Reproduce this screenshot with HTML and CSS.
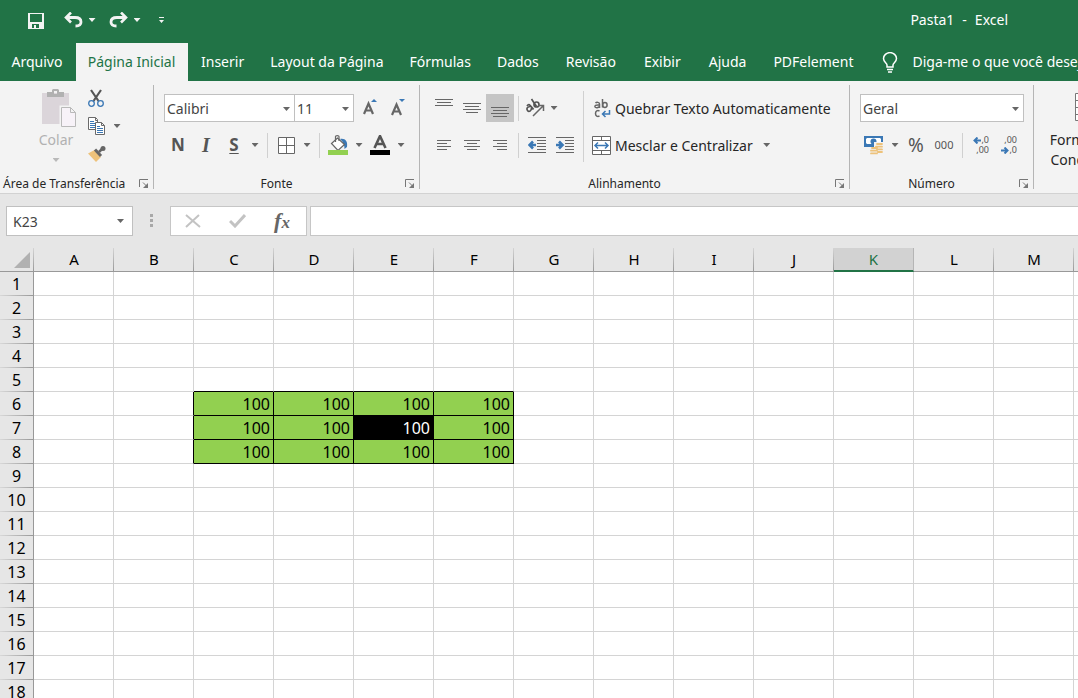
FILE: index.html
```html
<!DOCTYPE html>
<html lang="pt-BR">
<head>
<meta charset="utf-8">
<title>Pasta1 - Excel</title>
<link rel="stylesheet" href="styles.css">
</head>
<body>
<header class="titlebar">
  <div class="quick">
    <button class="q-btn" aria-label="Salvar"><svg width="16" height="16" viewBox="0 0 16 16"><path fill="#f3f3f3" fill-rule="evenodd" d="M0 0h16v16H0zM2 1v8h12V1zM4 11v4h2v-3h2v3h3v-4z"/></svg></button>
    <button class="q-btn undo" aria-label="Desfazer"><svg width="19" height="16" viewBox="0 0 19 16"><path d="M2 5.500h9c4 0 6 2 6 4.500s-2 4-5.500 4" fill="none" stroke="#f3f3f3" stroke-width="2.800"/><path d="M7 .5 2 5.500l5 5" fill="none" stroke="#f3f3f3" stroke-width="2.600"/></svg></button>
    <button class="drop light" aria-label="Opções de desfazer"></button>
    <button class="q-btn redo" aria-label="Refazer"><svg width="19" height="16" viewBox="0 0 19 16"><path d="M17 5.500H8c-4 0-6 2-6 4.500s2 4 5.500 4" fill="none" stroke="#f3f3f3" stroke-width="2.800"/><path d="m12 .5 5 5-5 5" fill="none" stroke="#f3f3f3" stroke-width="2.600"/></svg></button>
    <button class="drop light" aria-label="Opções de refazer"></button>
    <button class="q-btn custom" aria-label="Personalizar"><svg width="5" height="6" viewBox="0 0 5 6"><path fill="#f3f3f3" d="M0 0h5v1H0zM0 3h5L2.500 6z"/></svg></button>
  </div>
  <div class="doc-title"><span>Pasta1</span><span>-</span><span>Excel</span></div>
</header>
<nav class="tabs">
  <button class="tab file">Arquivo</button>
  <button class="tab home active">Página Inicial</button>
  <button class="tab">Inserir</button>
  <button class="tab">Layout da Página</button>
  <button class="tab">Fórmulas</button>
  <button class="tab">Dados</button>
  <button class="tab short">Revisão</button>
  <button class="tab short">Exibir</button>
  <button class="tab short">Ajuda</button>
  <button class="tab">PDFelement</button>
  <button class="tab tell"><svg width="16" height="21" viewBox="0 0 16 21"><path d="M5 15v-2C5 11 1.500 10 1.500 6.500a6.300 5.700 0 0 1 13 0C14.500 10 11 11 11 13v2zM5 17.500h6M6 20h4" fill="none" stroke="#fff" stroke-width="1.500"/></svg>Diga-me o que você deseja fazer</button>
</nav>
<section class="ribbon">
  <div class="group clip">
    <div class="body">
      <button class="paste">
        <svg width="34" height="38" viewBox="0 0 34 38"><path fill="#dbd5da" d="M0 4h27v31H0z"/><path fill="#b1b1b1" fill-rule="evenodd" d="M5 3h5V1l1-1h5l1 1v2h5v5H5zM12 2v3h3V2z"/><path fill="#f7f2f8" stroke="#f3f3f3" stroke-width="4" d="M19.500 18.500h9l5 5v14h-14z"/><path fill="#f7f2f8" stroke="#b9b9b9" d="M19.500 18.500h9l5 5v14h-14zM28.500 18.500v5h5"/></svg>
        <span>Colar</span><i class="tri"></i>
      </button>
      <div class="clip-tools">
        <button class="mini" aria-label="Recortar"><svg width="16" height="19" viewBox="0 0 16 19"><path d="m3 1 7.500 11M13 1 5.500 12" stroke="#555" stroke-width="2.200"/><circle cx="3.500" cy="14.500" r="2.800" fill="none" stroke="#3b78b5" stroke-width="1.300"/><circle cx="12.500" cy="14.500" r="2.800" fill="none" stroke="#3b78b5" stroke-width="1.300"/></svg></button>
        <div class="pair"><button class="mini" aria-label="Copiar"><svg width="17" height="18" viewBox="0 0 17 18"><path d="M.5.500h7l2 2v10h-9zM7.500.500v3h2" fill="#fff" stroke="#6a6a6a"/><path d="M2 4.500h4M2 6.500h5M2 8.500h5M2 10.500h5" stroke="#3b78b5"/><path d="M7.500 5.500h6l3 3v9h-9zM13.500 5.500v3h3" fill="#fff" stroke="#6a6a6a"/><path d="M9 9.500h3M9 11.500h6M9 13.500h6M9 15.500h6" stroke="#3b78b5"/></svg></button><button class="drop" aria-label="Opções de copiar"></button></div>
        <button class="mini" aria-label="Pincel de Formatação"><svg width="18" height="16" viewBox="0 0 18 16"><path fill="#edc27b" d="M0 7.500 6.500 4l6.500 7-5 5z"/><path d="m7 3.500 6 6.500" stroke="#666" stroke-width="3"/><path d="m11 6 3-3" stroke="#666" stroke-width="2.500"/><circle cx="15" cy="2.500" r="2.500" fill="#666"/></svg></button>
      </div>
    </div>
    <div class="caption"><span>Área de Transferência</span><button class="launch" aria-label="Mais opções"><svg width="10" height="9" viewBox="0 0 10 9"><path d="M.5 8V.5H9M4 3.500l4 4" fill="none" stroke="#777"/><path fill="#777" d="M9 4v5H4z"/></svg></button></div>
  </div>

  <div class="group font">
    <div class="body rows">
      <div class="row">
        <label class="combo face"><select aria-label="Fonte"><option>Calibri</option></select></label>
        <label class="combo size"><select aria-label="Tamanho da fonte"><option>11</option></select></label>
        <button class="icon grow" aria-label="Aumentar fonte"><svg width="14" height="20" viewBox="0 0 14 20"><path d="m1 16 4.500-10.500L10 16M3 12.500h5" fill="none" stroke="#666" stroke-width="2.200"/><path d="M8 4 11 1l3 3z" fill="#3b78b5"/></svg></button>
        <button class="icon" aria-label="Diminuir fonte"><svg width="14" height="20" viewBox="0 0 14 20"><path d="m1 17 4.500-10.500L10 17M3 13.500h5" fill="none" stroke="#666" stroke-width="2.200"/><path d="M8 1 11 4l3-3z" fill="#3b78b5"/></svg></button>
      </div>
      <div class="row second">
        <button class="icon bold">N</button>
        <button class="icon italic">I</button>
        <button class="icon under">S</button>
        <button class="drop" aria-label="Opções de sublinhado"></button>
        <span class="sep"></span>
        <button class="icon" aria-label="Bordas"><svg width="17" height="17" viewBox="0 0 17 17"><path d="M.5.500h16v16H.5zM8.500.500v16M.5 8.500h16" fill="#fff" stroke="#666"/></svg></button>
        <button class="drop" aria-label="Opções de bordas"></button>
        <span class="sep"></span>
        <button class="icon" aria-label="Cor de preenchimento"><svg width="20" height="20" viewBox="0 0 20 20"><path fill="#3b78b5" d="M12 4c5-1 8 2 7 8l-2.500 2c0-4-1-7-4.500-10"/><path d="m3.500 8.500 6-5.500 7 6.500-6.500 6z" fill="#fff" stroke="#666" stroke-width="1.200"/><path d="M7.500 7V1.500c0-1.200 3.500-1.200 3.500 0V6" fill="none" stroke="#666" stroke-width="1.200"/><path fill="#92d050" d="M0 15h20v5H0z"/></svg></button>
        <button class="drop" aria-label="Opções de preenchimento"></button>
        <button class="icon" aria-label="Cor da fonte"><svg width="20" height="20" viewBox="0 0 20 20"><path d="M4.500 13 10 1l5.500 12M7 9h6" fill="none" stroke="#555" stroke-width="2.600"/><path d="M0 15h20v5H0z"/></svg></button>
        <button class="drop" aria-label="Opções de cor da fonte"></button>
      </div>
    </div>
    <div class="caption"><span>Fonte</span><button class="launch" aria-label="Mais opções"><svg width="10" height="9" viewBox="0 0 10 9"><path d="M.5 8V.5H9M4 3.500l4 4" fill="none" stroke="#777"/><path fill="#777" d="M9 4v5H4z"/></svg></button></div>
  </div>

  <div class="group align">
    <div class="body">
      <div class="rows">
        <div class="row">
          <button class="icon" aria-label="Alinhar em cima"><svg width="18" height="20" viewBox="0 0 18 20"><path d="M0 1.500h18M2 4.500h14M0 7.500h18" stroke="#666"/></svg></button>
          <button class="icon" aria-label="Alinhar no meio"><svg width="18" height="20" viewBox="0 0 18 20"><path d="M0 5.500h18M2 8.500h14M0 11.500h18M3 14.500h12" stroke="#666"/></svg></button>
          <button class="icon selected" aria-label="Alinhar embaixo"><svg width="18" height="20" viewBox="0 0 18 20"><path d="M0 9.500h18M2 12.500h14M0 15.500h18M2 18.500h14" stroke="#666"/></svg></button>
          <span class="sep"></span>
          <button class="icon slim" aria-label="Orientação"><svg width="20" height="20" viewBox="0 0 20 20"><g fill="none" stroke="#555" stroke-width="1.700"><path d="M2 8c2-3 3-1 6.500 3.500M5.500 8.500c-3 0-4.500 2-3 4s4 .5 4-2.500"/><circle cx="11.500" cy="6.500" r="2.500"/><path d="m6.500 1 5 7.500"/></g><path d="M8 18 18 8M13 7.500h5.500V13" fill="none" stroke="#666" stroke-width="1.500"/></svg></button>
          <button class="drop" aria-label="Opções de orientação"></button>
        </div>
        <div class="row">
          <button class="icon" aria-label="Alinhar à esquerda"><svg width="14" height="12" viewBox="0 0 14 12"><path d="M0 1.500h14M0 4.500h10M0 7.500h14M0 10.500h10" stroke="#666"/></svg></button>
          <button class="icon" aria-label="Centralizar"><svg width="16" height="12" viewBox="0 0 16 12"><path d="M0 1.500h16M3 4.500h10M0 7.500h16M3 10.500h10" stroke="#666"/></svg></button>
          <button class="icon" aria-label="Alinhar à direita"><svg width="14" height="12" viewBox="0 0 14 12"><path d="M0 1.500h14M4 4.500h10M0 7.500h14M4 10.500h10" stroke="#666"/></svg></button>
          <span class="sep"></span>
          <button class="icon" aria-label="Diminuir recuo"><svg width="18" height="16" viewBox="0 0 18 16"><path d="M0 .5h18M9 3.500h9M9 6.500h9M9 9.500h9M9 12.500h9M0 15.500h18" stroke="#666"/><path d="M8 8H2M5 4.500 1.500 8 5 11.500" fill="none" stroke="#3b78b5" stroke-width="2.600"/></svg></button>
          <button class="icon" aria-label="Aumentar recuo"><svg width="18" height="16" viewBox="0 0 18 16"><path d="M0 .5h18M9 3.500h9M9 6.500h9M9 9.500h9M9 12.500h9M0 15.500h18" stroke="#666"/><path d="M0 8h6M3 4.500 6.500 8 3 11.500" fill="none" stroke="#3b78b5" stroke-width="2.600"/></svg></button>
        </div>
      </div>
      <span class="sep tall"></span>
      <div class="rows">
        <div class="row"><button class="wide"><svg width="19" height="19" viewBox="0 0 19 19"><g fill="none" stroke="#666" stroke-width="1.500"><path d="M3.500 4c1-1 4-1 4 1v4M7.500 6C3.500 5.500 2.500 7 3 8s3.500 1 4.500-.5M10.500 0v8.500"/><ellipse cx="12.900" cy="6" rx="2.200" ry="2.400"/><path d="M7.500 12c-2-1-4 0-4 2.500s2 3.500 4 2.500"/></g><path d="M17.500 11v4H11M13.500 12l-3 3 3 3" fill="none" stroke="#3b78b5" stroke-width="1.500"/></svg>Quebrar Texto Automaticamente</button></div>
        <div class="row"><button class="wide"><svg width="19" height="19" viewBox="0 0 19 19"><path d="M.5.500h18v18H.5zM.5 4.500h18M.5 14.500h18M9.500.500v4M9.500 14.500v4" fill="#fff" stroke="#666"/><path d="M3 9.500h13M6 6.500l-3 3 3 3M13 6.500l3 3-3 3" fill="none" stroke="#3b78b5" stroke-width="1.500"/></svg>Mesclar e Centralizar</button><button class="drop" aria-label="Opções de mesclar"></button></div>
      </div>
    </div>
    <div class="caption"><span>Alinhamento</span><button class="launch" aria-label="Mais opções"><svg width="10" height="9" viewBox="0 0 10 9"><path d="M.5 8V.5H9M4 3.500l4 4" fill="none" stroke="#777"/><path fill="#777" d="M9 4v5H4z"/></svg></button></div>
  </div>

  <div class="group number">
    <div class="body rows">
      <div class="row"><label class="combo format"><select aria-label="Formato de número"><option>Geral</option></select></label></div>
      <div class="row">
        <button class="icon" aria-label="Formato de contabilização"><svg width="20" height="20" viewBox="0 0 20 20"><path fill="#3b78b5" d="M0 1h19v11H0z"/><path fill="#fff" d="M2 4l1-1h13l1 1v5H3L2 8z"/><circle cx="9.500" cy="6.500" r="3" fill="#3b78b5"/><path fill="#f3f3f3" d="M10 7h10v13H5v-8h5z"/><g stroke="#edc27b" stroke-width="1.800" stroke-linecap="round"><path d="M13 9h5M12 11.700h6M13 14.400h5M14 17h4M8 13h5M7 15.700h6M7 18.400h6"/></g></svg></button>
        <button class="drop" aria-label="Opções de moeda"></button>
        <button class="icon pct">%</button>
        <button class="icon mil">000</button>
        <span class="sep"></span>
        <button class="icon dec" aria-label="Aumentar casas decimais"><span><svg width="8" height="7" viewBox="0 0 8 7"><path d="M8 3.500H2M4.500.500l-3 3 3 3" fill="none" stroke="#3b78b5" stroke-width="2"/></svg>,0</span><span>,00</span></button>
        <button class="icon dec" aria-label="Diminuir casas decimais"><span>,00</span><span><svg width="8" height="7" viewBox="0 0 8 7"><path d="M0 3.500h6M3.500.500l3 3-3 3" fill="none" stroke="#3b78b5" stroke-width="2"/></svg>,0</span></button>
      </div>
    </div>
    <div class="caption"><span>Número</span><button class="launch" aria-label="Mais opções"><svg width="10" height="9" viewBox="0 0 10 9"><path d="M.5 8V.5H9M4 3.500l4 4" fill="none" stroke="#777"/><path fill="#777" d="M9 4v5H4z"/></svg></button></div>
  </div>

  <div class="group styles">
    <div class="body">
      <button class="cond"><svg width="28" height="28" viewBox="0 0 28 28"><path d="M.5.500h27v27H.5zM.5 7.500h27M.5 14.500h27M.5 21.500h27M9.500.500v27M18.500.500v27" fill="#fff" stroke="#777"/></svg><span>Formatação</span><span>Condicional</span></button>
    </div>
  </div>
</section>
<section class="formula">
  <label class="combo name"><input type="text" value="K23" aria-label="Caixa de nome"></label>
  <svg class="dots" width="4" height="14" viewBox="0 0 4 14"><path fill="#a8a8a8" d="M0 0h3v3H0zM0 5h3v3H0zM0 10h3v3H0z"/></svg>
  <div class="fx-box">
    <button class="icon" aria-label="Cancelar"><svg width="16" height="14" viewBox="0 0 16 14"><path d="m1 1 14 12M14 1 1 13" stroke="#c3c3c3" stroke-width="2"/></svg></button>
    <button class="icon" aria-label="Inserir"><svg width="17" height="14" viewBox="0 0 17 14"><path d="m1 7 5 5L16 1" fill="none" stroke="#c3c3c3" stroke-width="3"/></svg></button>
    <button class="icon fx" aria-label="Inserir função">f<span>x</span></button>
  </div>
  <input class="entry" type="text" aria-label="Barra de fórmulas">
</section>
<main class="sheet"><table class="grid" id="grid"></table></main>
<script src="sheet.js"></script>
</body>
</html>
```
FILE: styles.css
```css
* { box-sizing: border-box; }
body {
  margin: 0;
  height: 100vh;
  overflow: hidden;
  display: flex;
  flex-direction: column;
  background: #e6e6e6;
  color: #262626;
  font: 14px/20px "Noto Sans", "Open Sans", sans-serif;
}
button { margin: 0; padding: 0; border: 0; background: none; color: inherit; font: inherit; white-space: nowrap; flex: none; }
svg { display: block; flex: none; }
input, select { font: inherit; color: #444; }

.titlebar { flex: none; height: 43px; display: flex; align-items: center; justify-content: space-between; background: #217346; color: #fff; padding: 0 70px 3px 28px; }
.quick { display: flex; align-items: center; }
.q-btn { display: flex; }
.quick .q-btn:first-child { margin: 0 20px 0 0; }
.quick .drop { margin-left: 2px; }
.redo { margin-left: 10px; }
.custom { margin-left: 15px; }
.quick > :first-child { padding-top: 2px; }
.doc-title { display: flex; gap: 8px; }

.tabs { flex: none; height: 38px; display: flex; background: #217346; color: #fff; overflow: hidden; }
.tab { padding: 0 13px; }
.tab.short { padding: 0 14px; }
.tab.file { width: 76px; padding: 0 2px 0 0; }
.tab.home { width: 112px; padding: 0 1px 0 0; }
.tab.active { background: #f3f3f3; color: #217346; }
.tab.tell { display: flex; align-items: center; gap: 14px; margin-left: 3px; }

.ribbon { flex: none; height: 113px; display: flex; background: #f3f3f3; border-bottom: 1px solid #d2d2d2; overflow: hidden; }
.group { flex: none; display: flex; flex-direction: column; position: relative; padding-right: 1px; }
.group::after { content: ""; position: absolute; right: 0; top: 4px; bottom: 4px; width: 1px; background: #b5b5b5; }
.clip { width: 154px; }
.font { width: 266px; }
.align { width: 430px; }
.number { width: 184px; }
.styles { width: 120px; }
.body { height: 92px; display: flex; }
.rows { display: flex; flex-direction: column; gap: 5px; padding-top: 11px; }
.row { height: 32px; display: flex; align-items: center; }
.font .body, .number .body, .align .body { padding-left: 10px; }
.caption { height: 20px; display: flex; align-items: center; font-size: 12px; }
.caption span { flex: 1; text-align: center; padding: 2px 6px 0 0; }
.launch { width: 14px; display: flex; }
.caption svg { margin-top: 1px; }

.icon { width: 28px; height: 28px; display: flex; align-items: center; justify-content: center; color: #555; }
.slim { width: 24px; }
.grow { margin-left: 2px; }
.selected { background: #c5c5c5; }
.bold { font-weight: 700; font-size: 17px; }
.italic { font: italic 700 20px/20px "Liberation Serif", serif; }
.under { font-weight: 700; font-size: 17px; text-decoration: underline; text-underline-offset: 2px; text-decoration-thickness: 1px; }
.drop { width: 14px; height: 28px; display: flex; align-items: center; justify-content: center; }
.drop::after, .tri, .combo::after { content: ""; width: 7px; height: 4px; background: #666; clip-path: polygon(0 0, 100% 0, 50% 100%); }
.light::after { background: #f3f3f3; }
.sep { width: 1px; height: 25px; margin: 0 4px; background: #d0d0d0; flex: none; }
.second .sep { margin: 0 4px 0 5px; }
.tall { height: 71px; margin-top: 10px; }

.combo { position: relative; height: 28px; display: block; flex: none; border: 1px solid #c0c0c0; background: #fff; }
.combo::after { position: absolute; right: 4px; top: 12px; }
.combo select, .combo input { width: 100%; height: 100%; border: 0; padding: 1px 2px 0; background: transparent; appearance: none; outline: 0; }
.face { width: 131px; }
.size { width: 60px; margin-left: -1px; }
.format { width: 164px; }

.clip .body { padding-left: 34px; gap: 10px; }
.paste { width: 44px; display: flex; flex-direction: column; align-items: center; color: #b1b1b1; padding: 8px 0 0 6px; }
.paste span { margin: 3px 6px 0 0; }
.paste .tri { background: #b9b9b9; margin: 8px 6px 0 0; }
.clip-tools { padding-top: 3px; display: flex; flex-direction: column; }
.mini { height: 28px; display: flex; align-items: center; }
.pair { display: flex; gap: 5px; }
.clip .caption span { text-align: left; padding-left: 3px; white-space: nowrap; }

.wide { height: 28px; display: flex; align-items: center; gap: 4px; padding: 1px 0 0 4px; }
.wide + .drop { margin-left: 7px; }
.pct { font-size: 19px; }
.mil { font-size: 11px; }
.dec { flex-direction: column; align-items: flex-end; padding-right: 6px; font-size: 9px; line-height: 13px; }
.dec span { display: flex; align-items: center; height: 10px; }
.dec { line-height: 10px; }
.cond { display: flex; flex-direction: column; align-items: center; width: 84px; margin-left: 13px; padding-top: 12px; }
.cond svg { margin-bottom: 9px; }

.formula { flex: none; height: 54px; display: flex; align-items: center; padding-left: 6px; }
.name { width: 127px; height: 30px; }
.name::after { right: 8px; }
.name input { padding: 0 6px; }
.dots { margin: 0 16px 0 17px; }
.fx-box { width: 137px; height: 30px; display: flex; justify-content: space-between; align-items: center; padding: 0 10px 0 8px; border: 1px solid #c6c6c6; background: #fff; }
.fx { font: italic 700 22px/22px "Liberation Serif", serif; color: #666; }
.fx span { font-size: 17px; padding-top: 3px; }
.entry { flex: 1; min-width: 0; height: 30px; margin-left: 3px; border: 1px solid #c6c6c6; border-right: 0; background: #fff; outline: 0; }

.sheet { flex: 1; min-height: 0; overflow: hidden; background: #fff; }
.grid { width: 1154px; table-layout: fixed; border-collapse: separate; border-spacing: 0; font-size: 16px; line-height: 22px; color: #000; }
.grid th, .grid td { height: 24px; padding: 0; font-weight: 400; border: solid #d4d4d4; border-width: 0 1px 1px 0; }
.grid td { text-align: right; padding-right: 3px; }
.grid thead th { font-size: 15px; line-height: 21px; background: linear-gradient(#d4d4d4, #999) right / 1px 100% no-repeat #e6e6e6; border-right: 0; border-bottom-color: #999; }
.grid .corner { width: 34px; }
.corner svg { margin: 0 0 0 14px; }
.grid tbody th { background: linear-gradient(90deg, #d8d8d8, #999) bottom / 100% 1px no-repeat #e6e6e6; border-bottom: 0; border-right-color: #999; }
.grid thead .current { background: #d2d2d2; color: #217346; border-bottom: 2px solid #217346; border-right: 1px solid #b5b5b5; }
.grid .fill { background: #92d050; }
.grid .dark { background: #000; color: #fff; }
.grid .edge-right { border-right-color: #000; }
.grid .edge-bottom { border-bottom-color: #000; }
```
FILE: sheet.js
```js
const columns = "ABCDEFGHIJKLMN".split("");
const rowCount = 18;
const active = "K";
const range = { left: 2, right: 5, top: 6, bottom: 8 };

const corner = '<th class="corner"><svg width="16" height="16" viewBox="0 0 16 16"><path fill="#b1b1b1" d="M16 0v16H0z"/></svg></th>';
let html = "<thead><tr>" + corner;
for (const name of columns) {
  html += `<th class="${name === active ? "current" : ""}">${name}</th>`;
}
html += "</tr></thead><tbody>";
for (let row = 1; row <= rowCount; row++) {
  html += `<tr><th>${row}</th>`;
  columns.forEach((name, col) => {
    const inRows = row >= range.top && row <= range.bottom;
    const inCols = col >= range.left && col <= range.right;
    const classes = [];
    if (inRows && inCols) classes.push("fill");
    if (row === 7 && name === "E") classes.push("dark");
    if (inRows && col >= range.left - 1 && col <= range.right) classes.push("edge-right");
    if (inCols && row >= range.top - 1 && row <= range.bottom) classes.push("edge-bottom");
    html += `<td class="${classes.join(" ")}">${inRows && inCols ? 100 : ""}</td>`;
  });
  html += "</tr>";
}
document.getElementById("grid").innerHTML = html + "</tbody>";
```
